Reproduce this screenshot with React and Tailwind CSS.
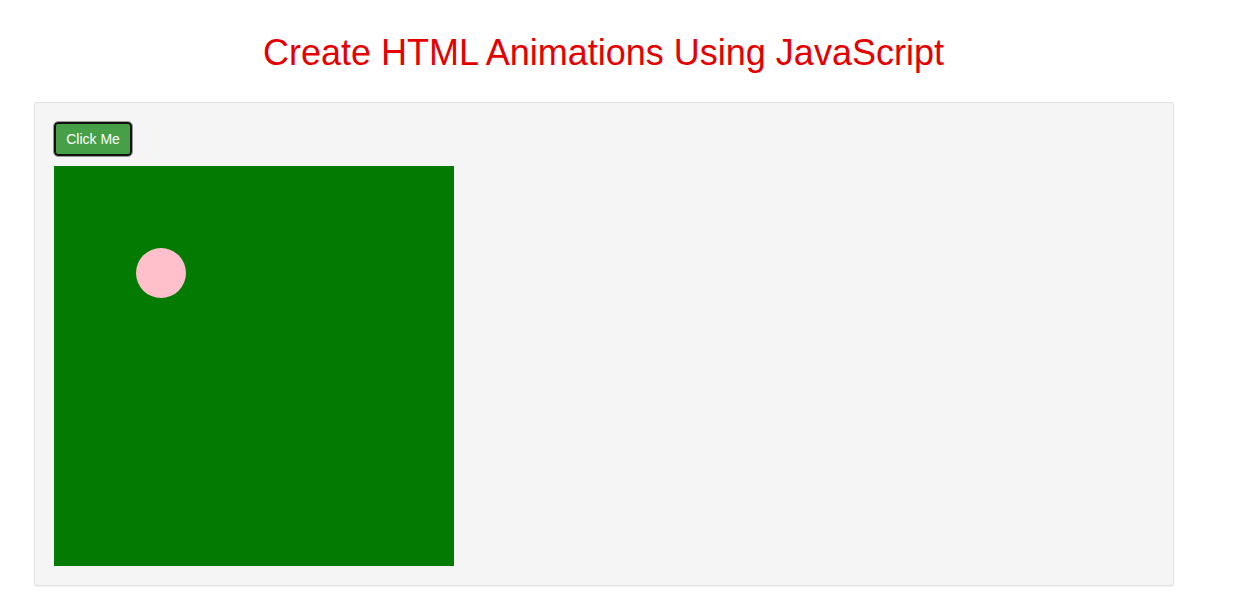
export default function App() {
  return (
    <div className="min-h-[606px] bg-white font-['Liberation_Sans',Arial,sans-serif]">
      <h1 className="pt-[30px] pl-[263px] text-[36px] leading-[45px] text-[#e50000]">
        Create HTML Animations Using JavaScript
      </h1>

      <div className="mt-[27px] ml-[34px] w-[1140px] rounded-[3px] border border-[#e2e2e2] bg-[#f5f5f5] p-[19px] shadow-[0_1px_2px_rgba(0,0,0,0.06)]">
        <button className="flex h-[34px] w-[78px] items-center justify-center rounded-[4px] border-2 border-[#111] bg-[#47a047] text-[14px] text-white outline outline-1 outline-[#9a9a9a]">
          Click Me
        </button>

        <div className="relative mt-[10px] h-[400px] w-[400px] bg-[#037b03]">
          {/* ball */}
          <div className="absolute left-[82px] top-[82px] h-[50px] w-[50px] rounded-full bg-[#ffc0cb]" />
        </div>
      </div>
    </div>
  );
}
